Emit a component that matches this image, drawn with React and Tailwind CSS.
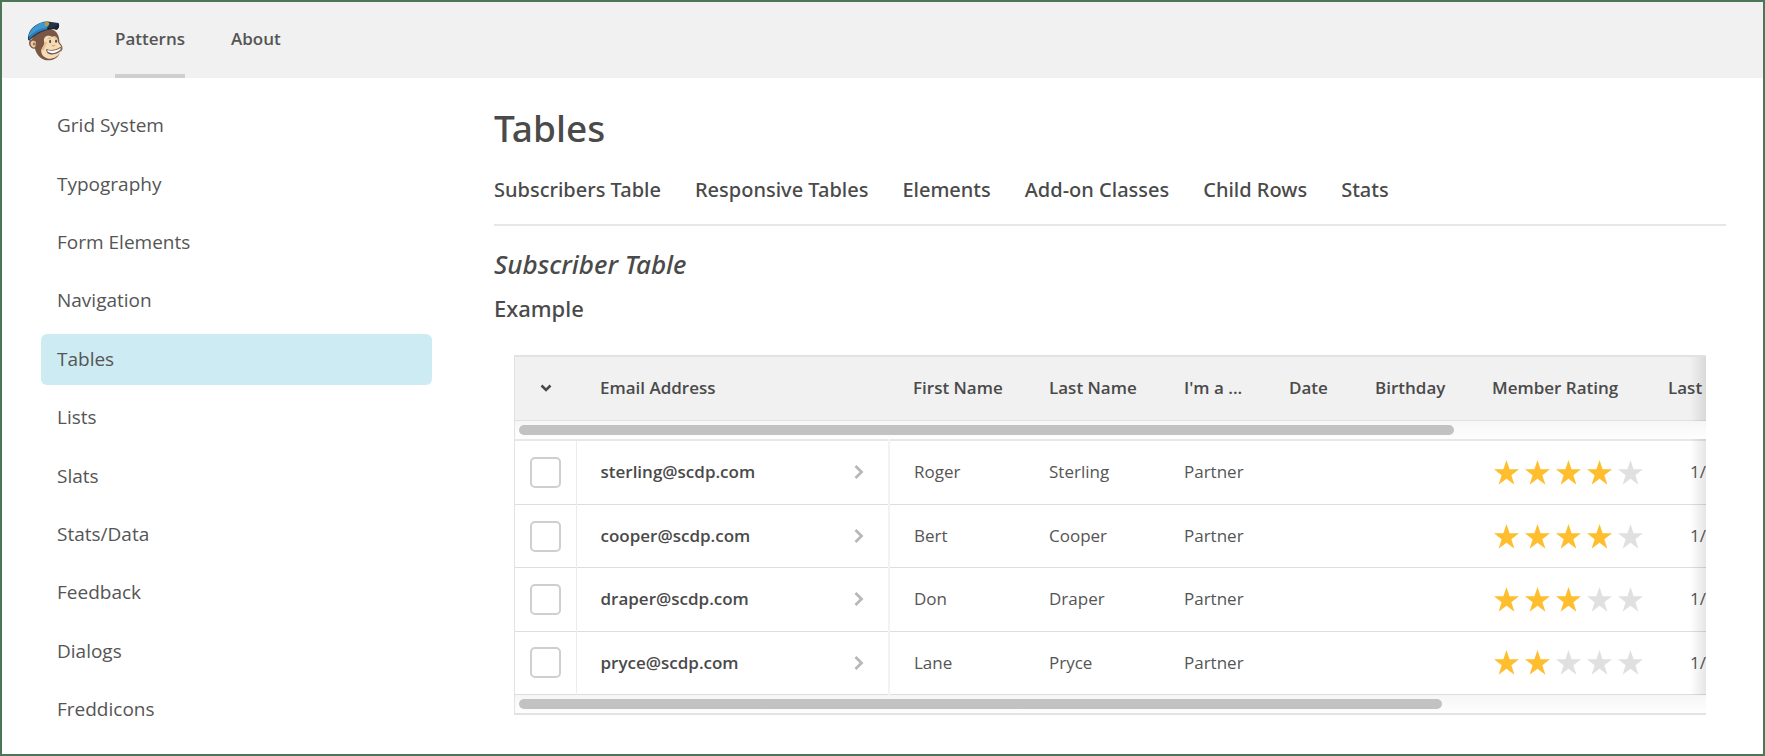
const sections = [
  'Grid System',
  'Typography',
  'Form Elements',
  'Navigation',
  'Tables',
  'Lists',
  'Slats',
  'Stats/Data',
  'Feedback',
  'Dialogs',
  'Freddicons',
];

const topics = ['Subscribers Table', 'Responsive Tables', 'Elements', 'Add-on Classes', 'Child Rows', 'Stats'];

const columns = ['First Name', 'Last Name', "I'm a ...", 'Date', 'Birthday', 'Member Rating', 'Last'];

const subscribers = [
  { email: 'sterling@scdp.com', first: 'Roger', last: 'Sterling', role: 'Partner', rating: 4, changed: '1/' },
  { email: 'cooper@scdp.com', first: 'Bert', last: 'Cooper', role: 'Partner', rating: 4, changed: '1/' },
  { email: 'draper@scdp.com', first: 'Don', last: 'Draper', role: 'Partner', rating: 3, changed: '1/' },
  { email: 'pryce@scdp.com', first: 'Lane', last: 'Pryce', role: 'Partner', rating: 2, changed: '1/' },
];

function Freddie() {
  return (
    <svg viewBox="22 30 110 124" className="h-[41px] w-[37px]" aria-hidden="true">
      <path d="M36 88c-9 2-11 13-6 21 4 7 11 9 15 7 5 20 20 36 41 36 18 0 31-9 35-25 5-3 9-8 7-16-2-7-6-9-9-14 0-17-5-30-18-37-20-10-57 4-65 28z" fill="#7a5644" />
      <path d="M38 93c-6 1-8 9-4 15 3 5 8 7 12 4l2-15c-2-3-6-5-10-4z" fill="#efc9a0" />
      <path d="M41 98c-3 1-3 6 0 9l5-2v-6z" fill="#9d7154" />
      <path d="M73 96c-3-12 5-20 15-18 5 1 7 3 10 3 7-4 15 0 16 9 0 5 1 8 4 12 5 5 9 10 7 18-4 13-15 26-33 27-15 0-27-9-28-22-1-10 11-15 9-29z" fill="#f5dcb6" />
      <path d="M74 97c2-2 6-1 8 2-3 7-7 11-8 18-2 5-6 6-8 5-2-9 8-13 8-25z" fill="#e8bd90" />
      <path d="M80 118c11 5 29 3 42-6 4 1 6 5 3 9-9 13-34 18-43 7-2-3-4-7-2-10z" fill="#6b5144" />
      <path d="M83 121c13 4 26 2 39-6 2 2 1 4-1 6-10 10-27 12-36 6-2-1-3-3-2-6z" fill="#fff" />
      <path d="M96 106c3 3 7 3 10 0" fill="none" stroke="#b98a66" strokeWidth="3" />
      <ellipse cx="91" cy="95" rx="3" ry="5" fill="#5d463c" />
      <ellipse cx="109" cy="94" rx="3" ry="5" fill="#5d463c" />
      <path d="M84 87c3-3 7-3 10-1M104 85c3-2 6-1 8 1" fill="none" stroke="#b08a6c" strokeWidth="2" />
      <path d="M24 90c-1-17 8-34 22-43 12-9 29-15 43-12l27 4c4 5 3 16-5 20-9-4-24-2-38 4-18 7-33 16-45 30z" fill="#23344a" />
      <path d="M25 79c3-14 12-26 25-34 11-7 25-11 35-8l-3 17c-20 1-39 12-55 27z" fill="#3f98d2" />
      <path d="M26 91l2-10c14-16 33-27 54-29l1 6c-23 4-42 15-57 33z" fill="#2f7fbb" />
      <path d="M83 54c12 3 25-1 33-14 4 7 2 16-5 20-9-4-19-3-28 0z" fill="#1d2430" />
      <path d="M75 38l10-3 4 6-4 8-9-1z" fill="#b79b45" />
    </svg>
  );
}

function Star({ filled }) {
  return (
    <svg viewBox="0 0 25 25" className={filled ? 'size-[25px] fill-[#ffbe2e]' : 'size-[25px] fill-[#e0e0e0]'} aria-hidden="true">
      <path d="M12.5 0l3.1 9.3H25l-7.6 5.9 3 9.5-7.900-5.900-7.900 5.900 3-9.500L0 9.300h9.400z" />
    </svg>
  );
}

function ScrollTrack({ children }) {
  return (
    <div className="relative z-10 h-[18px] bg-linear-to-b from-[#f6f6f6] to-[#fefefe] px-1 pt-1">
      {children}
    </div>
  );
}

export default function App() {
  return (
    <div className="flex min-h-screen flex-col border-2 border-[#4b7657] bg-white font-['Open_Sans',sans-serif] text-[#4a4a4a]">
      <header className="flex h-[76px] bg-[#f1f1f1] pl-[25px]">
        <a href="#home" aria-label="Home" className="pt-[18px]">
          <Freddie />
        </a>
        <nav aria-label="Main" className="ml-[51px] flex gap-[46px] text-[17px] leading-6 font-semibold text-[#555]">
          <a href="#patterns" aria-current="page" className="border-b-4 border-[#cfcfcf] pt-[25px]">
            Patterns
          </a>
          <a href="#about" className="pt-[25px]">
            About
          </a>
        </nav>
      </header>

      <div className="flex grow pr-[37px] pl-[39px]">
        <nav aria-label="Patterns" className="flex w-[391px] shrink-0 flex-col justify-between pt-[22px] pb-[19px] text-[19px] text-[#555]">
          {sections.map((name) => (
            <a
              key={name}
              href={'#' + name}
              className={
                name === 'Tables'
                  ? 'flex h-[51px] items-center rounded-md bg-[#cdebf2] px-4'
                  : 'flex h-[51px] items-center rounded-md px-4'
              }
            >
              {name}
            </a>
          ))}
        </nav>

        <main className="ml-[62px] min-w-0 grow">
          <div className="font-['Noto_Sans',sans-serif] font-medium">
            <h1 className="pt-[22px] text-[37px] leading-[56px]">Tables</h1>
            <nav aria-label="On this page" className="flex gap-[34px] border-b-2 border-[#e7e7e7] pt-5 pb-5 text-[20px] leading-7">
              {topics.map((name) => (
                <a key={name} href={'#' + name}>
                  {name}
                </a>
              ))}
            </nav>
            <h2 className="pt-5 text-[26px] leading-9 italic">Subscriber Table</h2>
            <h3 className="pt-2.5 text-[22px] leading-8">Example</h3>
          </div>

          <div className="mx-5 mt-[31px] overflow-hidden border-y-2 border-l border-[#e2e2e2]">
            <div className="relative">
              <table className="h-[338px] w-full table-fixed border-collapse text-left text-[17px] leading-6 whitespace-nowrap">
                <colgroup>
                  <col className="w-[61px]" />
                  <col className="w-[313px]" />
                  <col className="w-[136px]" />
                  <col className="w-[135px]" />
                  <col className="w-[105px]" />
                  <col className="w-[86px]" />
                  <col className="w-[117px]" />
                  <col className="w-[176px]" />
                  <col />
                </colgroup>
                <thead>
                  <tr className="h-[63px] border-b border-[#e0e0e0] bg-[#f1f1f1]">
                    <th>
                      <button type="button" aria-label="Select subscribers" className="mx-auto flex size-6 items-center justify-center">
                        <svg viewBox="0 0 12 8" className="h-2 w-3" aria-hidden="true">
                          <path d="M1.5 1.5L6 6l4.5-4.5" fill="none" stroke="#4a4a4a" strokeWidth="2.6" />
                        </svg>
                      </button>
                    </th>
                    <th className="pl-6 font-semibold">Email Address</th>
                    {columns.map((name) => (
                      <th key={name} className="overflow-hidden pl-6 font-semibold">
                        {name}
                      </th>
                    ))}
                  </tr>
                  <tr className="h-5 border-b-2 border-[#e7e7e7]">
                    <td colSpan={9}>
                      <ScrollTrack>
                        <div className="h-2.5 w-[79%] rounded-full bg-[#c2c2c2]" />
                      </ScrollTrack>
                    </td>
                  </tr>
                </thead>
                <tbody className="text-[#555]">
                  {subscribers.map((person) => (
                    <tr key={person.email} className="border-b border-[#dedede]">
                      <td className="border-r border-[#ececec]">
                        <input
                          type="checkbox"
                          aria-label={'Select ' + person.email}
                          className="mx-auto block size-[31px] appearance-none rounded-[5px] border-2 border-[#cfcfcf] bg-white"
                        />
                      </td>
                      <td className="border-r-2 border-[#f3f3f3] pr-6 pl-6">
                        <a href={'#' + person.email} className="flex items-center justify-between font-semibold text-[#4a4a4a]">
                          {person.email}
                          <svg viewBox="0 0 10 14" className="h-3.5 w-2.5" aria-hidden="true">
                            <path d="M1.5 1L7.5 7l-6 6" fill="none" stroke="#b8b8b8" strokeWidth="2.8" />
                          </svg>
                        </a>
                      </td>
                      <td className="pl-6">{person.first}</td>
                      <td className="pl-6">{person.last}</td>
                      <td className="pl-6">{person.role}</td>
                      <td />
                      <td />
                      <td className="pl-[26px]">
                        <div role="img" aria-label={person.rating + ' out of 5 stars'} className="flex gap-1.5">
                          {[1, 2, 3, 4, 5].map((n) => (
                            <Star key={n} filled={n <= person.rating} />
                          ))}
                        </div>
                      </td>
                      <td className="overflow-hidden text-right">{person.changed}</td>
                    </tr>
                  ))}
                </tbody>
              </table>
              <div className="pointer-events-none absolute inset-y-0 right-0 w-4 bg-linear-to-r from-black/0 to-black/10" />
            </div>
            <ScrollTrack>
              <div className="h-2.5 w-[78%] rounded-full bg-[#c2c2c2]" />
            </ScrollTrack>
          </div>
        </main>
      </div>
    </div>
  );
}
